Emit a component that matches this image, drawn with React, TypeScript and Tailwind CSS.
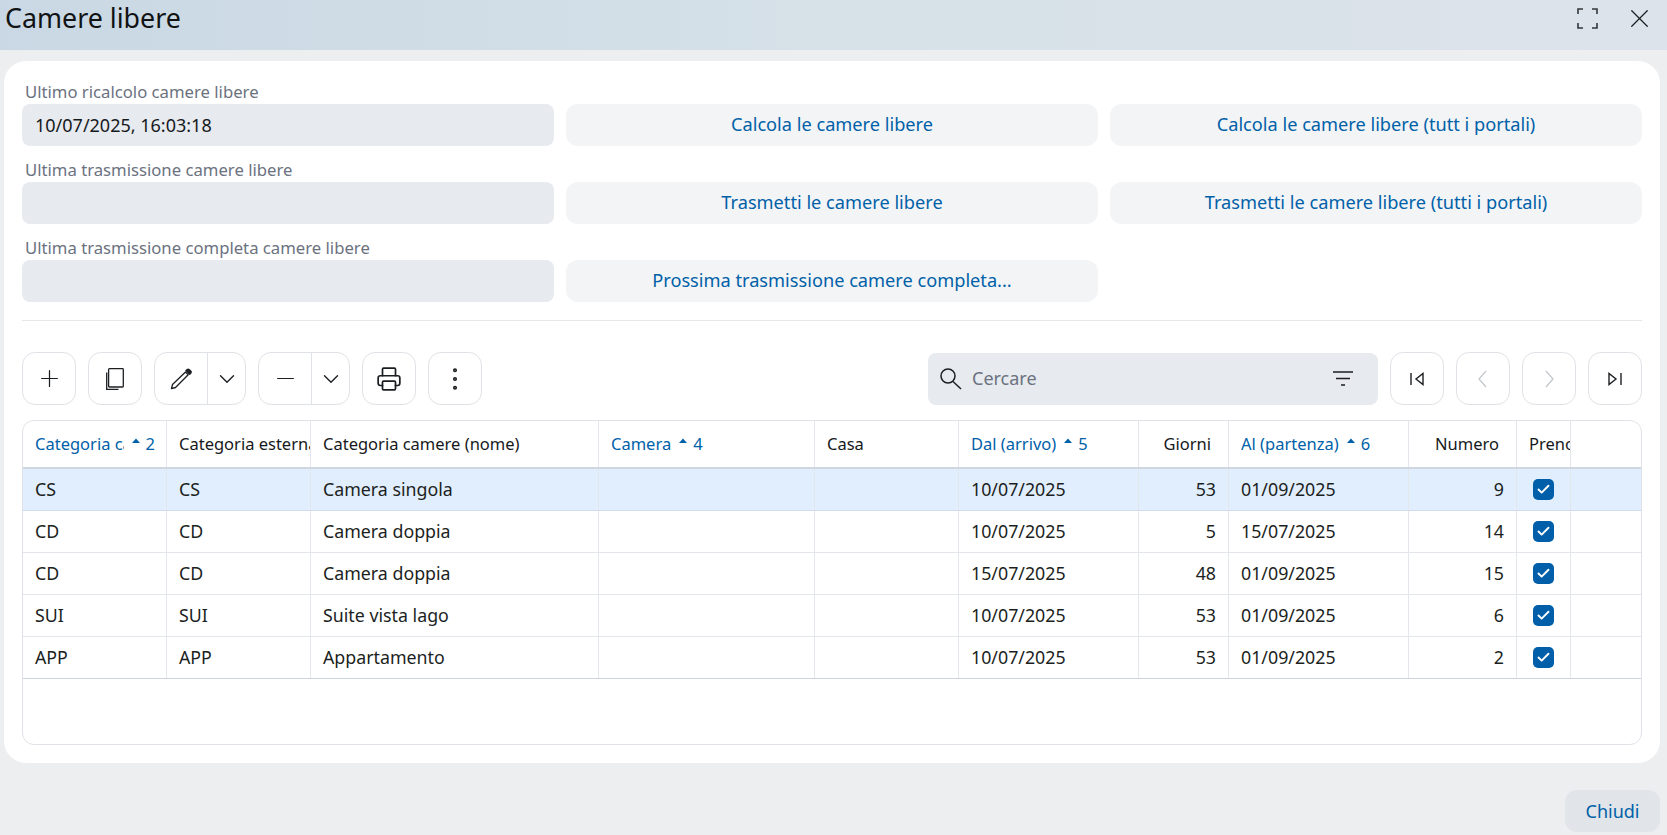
import { Check, ChevronDown, Minus, MoreVertical, Plus, Printer, X } from 'lucide-react';

const COLS =
  'grid grid-cols-[144px_144px_288px_216px_144px_180px_90px_180px_108px_54px_1fr]';

const ROWS = [
  ['CS', 'CS', 'Camera singola', '10/07/2025', '53', '01/09/2025', '9'],
  ['CD', 'CD', 'Camera doppia', '10/07/2025', '5', '15/07/2025', '14'],
  ['CD', 'CD', 'Camera doppia', '15/07/2025', '48', '01/09/2025', '15'],
  ['SUI', 'SUI', 'Suite vista lago', '10/07/2025', '53', '01/09/2025', '6'],
  ['APP', 'APP', 'Appartamento', '10/07/2025', '53', '01/09/2025', '2'],
];

const IconButton = ({ children, disabled }: { children: React.ReactNode; disabled?: boolean }) => (
  <button
    className={`flex items-center justify-center h-[53px] w-[54px] rounded-[13px] border border-[#dfe2e6] bg-white ${
      disabled ? 'text-[#c4c8cd]' : 'text-[#1c1f22]'
    }`}
  >
    {children}
  </button>
);

const SplitButton = ({ children }: { children: React.ReactNode }) => (
  <div className="flex h-[53px] w-[92px] rounded-[13px] border border-[#dfe2e6] bg-white text-[#1c1f22]">
    <button className="flex items-center justify-center w-[53px] border-r border-[#dfe2e6]">
      {children}
    </button>
    <button className="flex flex-1 items-center justify-center">
      <ChevronDown size={26} strokeWidth={1.25} />
    </button>
  </div>
);

const SortMark = ({ n }: { n: number }) => (
  <span className="flex items-center shrink-0">
    <svg width="12" height="8" viewBox="0 0 12 8" className="mb-[7px] ml-[6px] mr-[4px]">
      <path d="M6 1.5 10 6H2z" fill="#0061a8" />
    </svg>
    {n}
  </span>
);

const HeaderCell = ({
  label,
  sort,
  right,
  narrow,
}: {
  label: string;
  sort?: number;
  right?: boolean;
  narrow?: boolean;
}) => (
  <div
    className={`flex items-center h-full border-r border-[#e3e7ec] overflow-hidden whitespace-nowrap text-[16.5px] ${
      right ? 'justify-end pl-3 pr-[17px]' : narrow ? 'pl-3 pr-[11px]' : 'pl-3'
    } ${sort ? 'text-[#0061a8]' : 'text-[#16191c]'}`}
  >
    <span className="overflow-hidden">{label}</span>
    {sort ? <SortMark n={sort} /> : null}
  </div>
);

const Cell = ({ children, right }: { children?: React.ReactNode; right?: boolean }) => (
  <div
    className={`flex items-center h-full px-3 border-r border-[#e3e7ec] text-[17.8px] text-[#1c1f22] ${
      right ? 'justify-end' : ''
    }`}
  >
    {children}
  </div>
);

const Field = ({ label, value }: { label: string; value?: string }) => (
  <div className="flex flex-col">
    <label className="h-[22px] pl-[3px] text-[16.7px] leading-[20px] text-[#6b7280]">{label}</label>
    <div className="flex items-center h-[42px] px-[13px] rounded-lg bg-[#e7eaee] text-[18px] text-[#16191c]">
      {value}
    </div>
  </div>
);

const ActionButton = ({ children }: { children: React.ReactNode }) => (
  <button className="self-end h-[42px] rounded-xl bg-[#f3f4f6] text-[18.2px] text-[#0061a8]">
    {children}
  </button>
);

export default function App() {
  return (
    <div className="flex flex-col h-[835px] w-full overflow-hidden bg-[#eceef0] font-['Noto_Sans',sans-serif]">
      {/* Title bar */}
      <header className="flex items-center shrink-0 h-[50px] pb-[13px] pl-[5px] pr-[12px] bg-gradient-to-r from-[#c9d8e4] via-[#d6e1e8] to-[#dde3ea]">
        <h1 className="flex-1 text-[26.8px] text-[#111315]">Camere libere</h1>
        <svg width="21" height="21" viewBox="0 0 21 21" fill="none" stroke="#33373b" strokeWidth="1.6" className="mr-[26px]">
          <path d="M1 6V1h5M15 1h5v5M1 15v5h5M15 20h5v-5" />
        </svg>
        <X size={31} strokeWidth={1} className="text-[#1c1f22]" />
      </header>

      {/* Card */}
      <main className="mt-[11px] mx-1 w-[1656px] h-[702px] shrink-0 rounded-[22px] bg-white px-[18px] pt-[21px]">
        <div className="grid grid-cols-3 gap-x-3 gap-y-[14px] w-[1620px]">
          <Field label="Ultimo ricalcolo camere libere" value="10/07/2025, 16:03:18" />
          <ActionButton>Calcola le camere libere</ActionButton>
          <ActionButton>Calcola le camere libere (tutt i portali)</ActionButton>
          <Field label="Ultima trasmissione camere libere" />
          <ActionButton>Trasmetti le camere libere</ActionButton>
          <ActionButton>Trasmetti le camere libere (tutti i portali)</ActionButton>
          <Field label="Ultima trasmissione completa camere libere" />
          <ActionButton>Prossima trasmissione camere completa...</ActionButton>
        </div>

        <div className="mt-[18px] border-t border-[#e5e7eb]" />

        {/* Toolbar */}
        <div className="flex items-center mt-[31px] gap-3">
          <IconButton>
            <Plus size={27} strokeWidth={1.1} />
          </IconButton>
          <IconButton>
            <svg width="18" height="22" viewBox="0 0 18 22" fill="none" stroke="currentColor" strokeWidth="1.3">
              <rect x="2.6" y="0.7" width="14.7" height="18.3" rx="0.8" />
              <path d="M0.7 4.5V21.3H12.5" />
            </svg>
          </IconButton>
          <SplitButton>
            <svg width="22" height="22" viewBox="0 0 22 22" fill="none" stroke="currentColor" strokeWidth="1.3" strokeLinejoin="round">
              <path d="M1.5 20.5l1-4L15.5 4l2.7 2.7L5.5 19.5z" />
              <path d="M16 2.5l3.7 3.7 1-1a1.6 1.6 0 0 0 0-2.2l-1.4-1.4a1.6 1.6 0 0 0-2.2 0z" fill="currentColor" />
            </svg>
          </SplitButton>
          <SplitButton>
            <Minus size={27} strokeWidth={1.1} />
          </SplitButton>
          <IconButton>
            <Printer size={26} strokeWidth={1.6} />
          </IconButton>
          <IconButton>
            <MoreVertical size={30} strokeWidth={1.3} />
          </IconButton>

          <div className="flex items-center ml-auto w-[450px] h-[52px] rounded-lg bg-[#e7eaee] pl-[12px] pr-[25px]">
            <svg width="22" height="22" viewBox="0 0 22 22" fill="none" stroke="#1c1f22" strokeWidth="1.5">
              <circle cx="8" cy="8" r="7" />
              <path d="M13 13.5 21 21" />
            </svg>
            <span className="flex-1 ml-[10px] text-[18px] text-[#6b7280]">Cercare</span>
            <svg width="20" height="15" viewBox="0 0 20 15" fill="none" stroke="#1c1f22" strokeWidth="1.4">
              <path d="M0 1h20M3 7.5h14M8 14h4" />
            </svg>
          </div>
          <IconButton>
            <svg width="14" height="14" viewBox="0 0 14 14" fill="none" stroke="currentColor" strokeWidth="1.4">
              <path d="M1 1v12M13 1.5v11L6 7z" />
            </svg>
          </IconButton>
          <IconButton disabled>
            <svg width="12" height="18" viewBox="0 0 12 18" fill="none" stroke="currentColor" strokeWidth="1.3">
              <path d="M9 1 2 9l7 8" />
            </svg>
          </IconButton>
          <IconButton disabled>
            <svg width="12" height="18" viewBox="0 0 12 18" fill="none" stroke="currentColor" strokeWidth="1.3">
              <path d="M3 1l7 8-7 8" />
            </svg>
          </IconButton>
          <IconButton>
            <svg width="14" height="14" viewBox="0 0 14 14" fill="none" stroke="currentColor" strokeWidth="1.4">
              <path d="M13 1v12M1 1.5v11L8 7z" />
            </svg>
          </IconButton>
        </div>

        {/* Table */}
        <div className="mt-[15px] h-[325px] rounded-xl border border-[#dfe3e8] overflow-hidden">
          <div className={`${COLS} h-[48px] border-b-2 border-[#ced6e0]`}>
            <HeaderCell label="Categoria camere (codice)" sort={2} narrow />
            <HeaderCell label="Categoria esterna" />
            <HeaderCell label="Categoria camere (nome)" />
            <HeaderCell label="Camera" sort={4} />
            <HeaderCell label="Casa" />
            <HeaderCell label="Dal (arrivo)" sort={5} />
            <HeaderCell label="Giorni" right />
            <HeaderCell label="Al (partenza)" sort={6} />
            <HeaderCell label="Numero" right />
            <HeaderCell label="Prenotabile" />
            <div />
          </div>
          {ROWS.map((row, i) => (
            <div
              key={i}
              className={`${COLS} h-[42px] border-b ${
                i === 0
                  ? 'bg-[#e1eefd] border-[#d0dcea]'
                  : i === ROWS.length - 1
                    ? 'border-[#ced3d9]'
                    : 'border-[#e3e7ec]'
              }`}
            >
              <Cell>{row[0]}</Cell>
              <Cell>{row[1]}</Cell>
              <Cell>{row[2]}</Cell>
              <Cell />
              <Cell />
              <Cell>{row[3]}</Cell>
              <Cell right>{row[4]}</Cell>
              <Cell>{row[5]}</Cell>
              <Cell right>{row[6]}</Cell>
              <div className="flex items-center justify-center h-full border-r border-[#e3e7ec]">
                <span className="flex items-center justify-center w-[21px] h-[21px] rounded-[5px] bg-[#005fa8] text-white">
                  <Check size={15} strokeWidth={3} />
                </span>
              </div>
              <div />
            </div>
          ))}
        </div>
      </main>

      {/* Footer */}
      <footer className="flex justify-end mt-[27px] pr-[7px]">
        <button className="h-[42px] w-[95px] rounded-xl bg-[#e1e4e8] text-[18px] text-[#0061a8]">
          Chiudi
        </button>
      </footer>
    </div>
  );
}
